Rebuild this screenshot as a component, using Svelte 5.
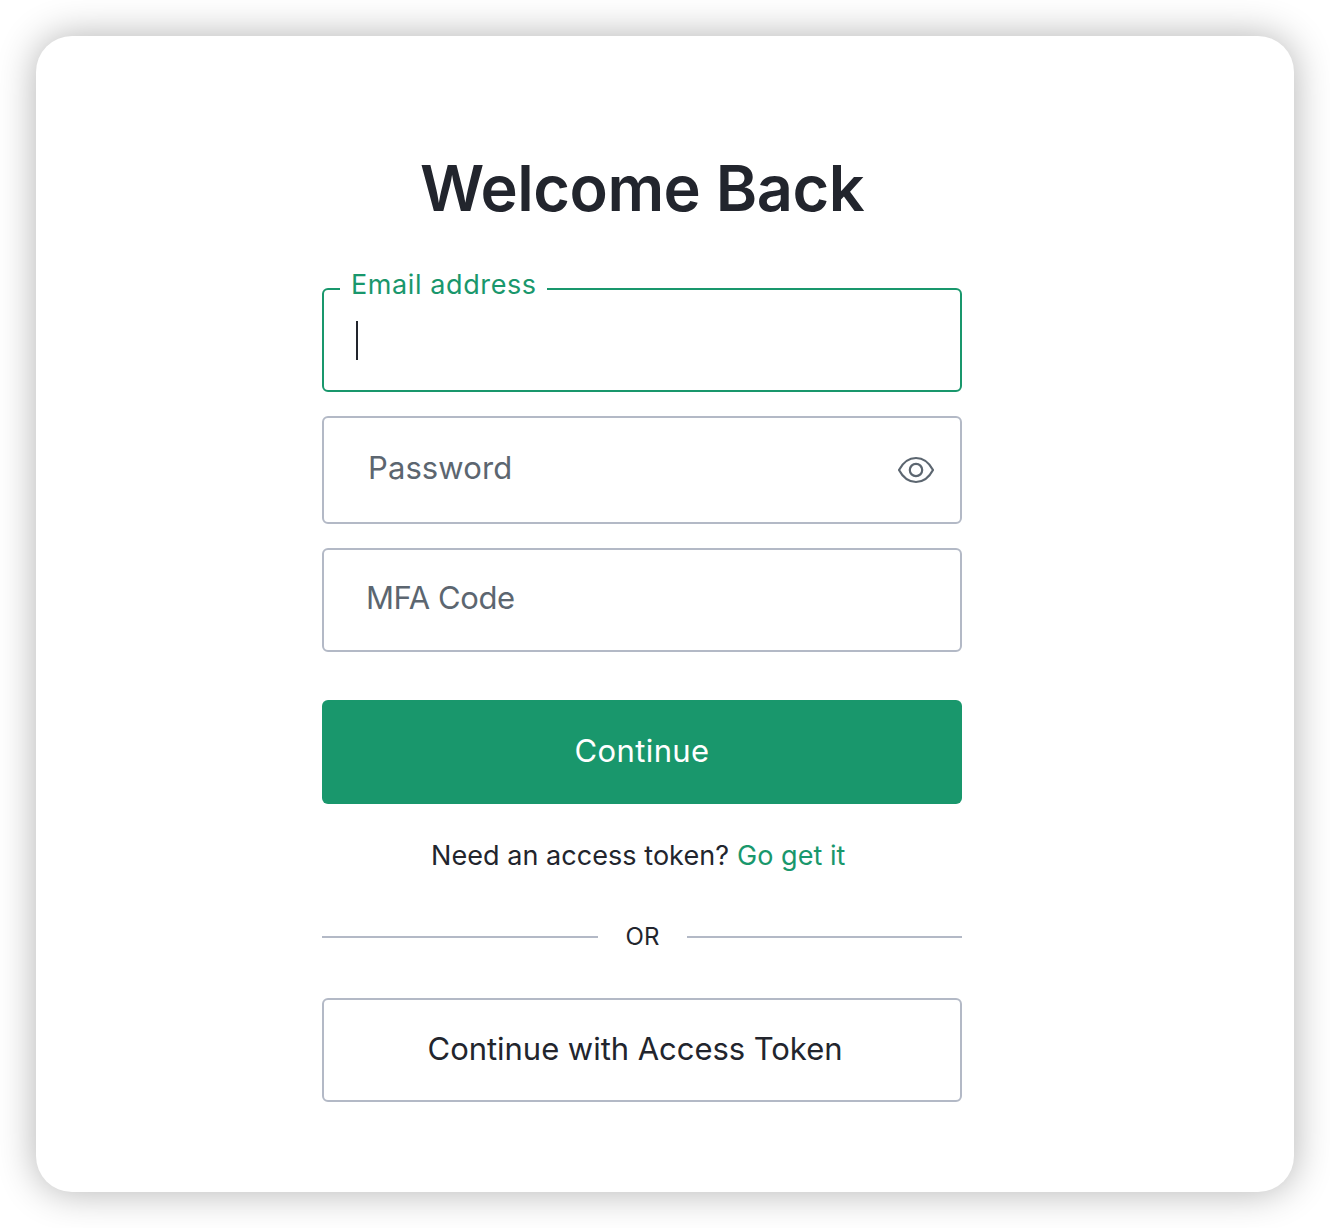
<script>
  let email = $state('');
</script>

<main class="stage">
  <section class="card">
    <form class="login" onsubmit={(e) => e.preventDefault()}>
      <h1><span>Welcome Back</span></h1>
      <div class="field active">
        <label for="email">Email address</label>
        <div class="entry" id="email">{email}<i class="caret"></i></div>
      </div>
      <div class="field password">
        <span class="pw">Password</span>
        <svg class="eye" viewBox="0 0 36 28" width="36" height="28" fill="none" stroke="#5c6670" stroke-width="2.2">
          <path d="M1 14C5 6.500 10.500 2 18 2s13 4.500 17 12c-4 7.500-9.500 12-17 12S5 21.500 1 14Z" stroke-linejoin="round" />
          <circle cx="18" cy="14" r="6.2" />
        </svg>
      </div>
      <div class="field mfa"><span class="code">MFA Code</span></div>
      <button class="primary"><span>Continue</span></button>
      <p class="help"><span class="need">Need an access token?</span><a href="#token">Go get it</a></p>
      <div class="divider"><span>OR</span></div>
      <button class="secondary" type="button"><span>Continue with Access Token</span></button>
    </form>
  </section>
</main>

<style>
  :global(body) { margin: 0; background: #fff; }
  * { box-sizing: border-box; }
  .stage { width: 1330px; height: 1228px; padding: 36px; overflow: hidden; font-family: Inter, sans-serif; color: #22252d; }
  .card { width: 1258px; height: 1156px; border-radius: 36px; background: #fff; box-shadow: 0 0 38px rgba(0, 0, 0, 0.31); padding: 108px 0 0 286px; }
  .login { width: 640px; display: flex; flex-direction: column; }
  h1 { margin: 0; height: 90px; line-height: 88px; text-align: center; font-size: 63px; font-weight: 620; letter-spacing: -0.5px; white-space: nowrap; }
  .field { border: 2px solid #b3b9c6; border-radius: 6px; display: flex; align-items: center; font-size: 31px; color: #5c6670; }
  .active { position: relative; margin-top: 54px; height: 104px; border-color: #19976c; }
  label { position: absolute; left: 16px; top: -23px; width: 207px; padding-left: 11px; background: #fff; color: #19976c; font-size: 27px; line-height: 36px; white-space: nowrap; letter-spacing: 0.6px; }
  .entry { padding-left: 32px; }
  .caret { display: block; width: 2px; height: 39px; background: #22252d; }
  .password { margin-top: 24px; height: 108px; padding: 0 26px 6px 44px; justify-content: space-between; letter-spacing: 0.1px; }
  .eye { margin-top: 6px; }
  .mfa { margin-top: 24px; height: 104px; padding: 0 0 6px 42px; letter-spacing: -0.4px; }
  button { height: 104px; border-radius: 6px; font: 400 31px Inter, sans-serif; padding: 0 0 4px; }
  .primary { margin-top: 48px; border: 0; background: #19976c; color: #fff; letter-spacing: 0.4px; }
  .help { margin: 34px 0 0 109px; display: flex; height: 36px; line-height: 36px; font-size: 27px; letter-spacing: 0.05px; white-space: nowrap; }
  .need { width: 306px; }
  a { color: #19976c; text-decoration: none; }
  .divider { margin-top: 45px; height: 36px; display: flex; align-items: center; justify-content: space-between; font-size: 24px; }
  .divider span { padding-bottom: 1px; }
  .divider::before, .divider::after { content: ''; width: 276px; height: 2px; background: #b3b9c6; }
  .divider::after { width: 275px; }
  .secondary { margin-top: 43px; border: 2px solid #b3b9c6; background: #fff; color: #22252d; padding-right: 14px; letter-spacing: -0.04px; }
</style>
